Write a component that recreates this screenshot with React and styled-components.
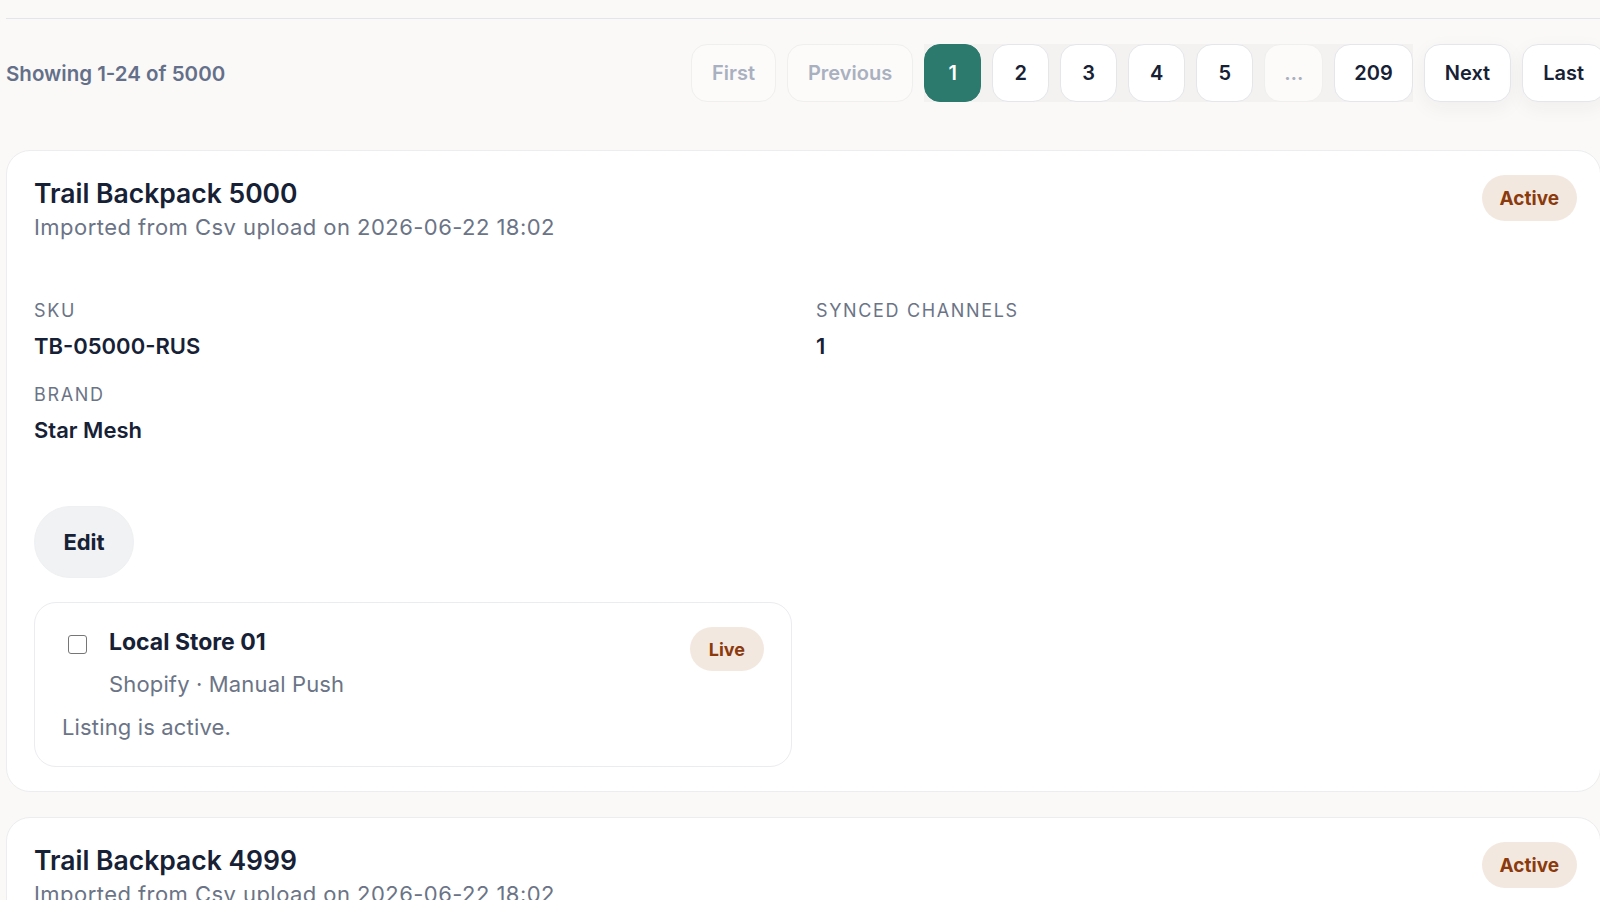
import React from 'react';
import styled, { createGlobalStyle } from 'styled-components';

const GlobalStyle = createGlobalStyle`
    html, body {
        margin: 0;
        padding: 0;
        background: #faf9f7;
        overflow: hidden;
        height: 900px;
    }
    body {
        font-family: Inter, "Noto Sans", Arial, sans-serif;
        color: #172135;
    }
    * {
        box-sizing: border-box;
    }
`;

export const PageWrap = styled.div`
    margin: 18px 0 0 6px;
    width: 1595px;
    border-top: 1px solid #e3e5ea;
`;

export const Toolbar = styled.div`
    display: flex;
    align-items: center;
    justify-content: space-between;
    padding-top: 25px;
    margin-right: -4px;
`;

export const ShowingText = styled.div`
    font-size: 20.5px;
    font-weight: 600;
    color: #64708a;
`;

export const Pagination = styled.nav`
    display: flex;
    align-items: center;
    gap: 11px;
    flex-shrink: 0;
`;

export const PageNumbers = styled.div`
    display: flex;
    gap: 11px;
    background: #f3f2f0;
`;

export const PageButton = styled.button`
    height: 58px;
    min-width: 57px;
    padding: 0 ${p => (p.$number ? '19px' : '20px')};
    border-radius: 16px;
    border: 1px solid ${p => (p.$active ? '#2c7a6d' : p.$disabled ? '#efefee' : '#e4e6ea')};
    background: ${p => (p.$active ? '#2c7a6d' : p.$disabled ? '#fcfbfa' : '#ffffff')};
    color: ${p => (p.$active ? '#ffffff' : p.$disabled ? '#a9b0bf' : '#172135')};
    font-family: inherit;
    font-size: 20px;
    font-weight: 600;
    box-shadow: ${p => (p.$raised ? '0 6px 20px rgba(30, 30, 30, 0.05)' : 'none')};
    cursor: pointer;
`;

export const ProductList = styled.div`
    display: flex;
    flex-direction: column;
    gap: 25px;
    margin-top: 48px;
`;

export const ProductCard = styled.section`
    background: #ffffff;
    border: 1px solid #ecedef;
    border-radius: 24px;
    padding: 24px 23px 24px 27px;
`;

export const CardHeader = styled.div`
    display: flex;
    justify-content: space-between;
    align-items: flex-start;
`;

export const Title = styled.h2`
    margin: 0;
    font-size: 26.5px;
    line-height: 36px;
    font-weight: 600;
    color: #172135;
`;

export const Subtitle = styled.p`
    margin: 0;
    font-size: 22px;
    line-height: 32px;
    letter-spacing: 0.45px;
    color: #6b7486;
`;

export const Badge = styled.span`
    display: inline-flex;
    align-items: center;
    justify-content: center;
    height: ${p => (p.$small ? '44px' : '46px')};
    padding: 0 ${p => (p.$small ? '19px' : '18px')};
    border-radius: 999px;
    background: #f3e8e0;
    color: #8a3a0c;
    font-size: ${p => (p.$small ? '18px' : '19px')};
    font-weight: 700;
    flex-shrink: 0;
`;

export const DetailGrid = styled.div`
    display: grid;
    grid-template-columns: 758px 1fr;
    column-gap: 24px;
    row-gap: 21px;
    margin-top: 55px;
`;

export const DetailLabel = styled.div`
    font-size: 18px;
    line-height: 25px;
    letter-spacing: 1.65px;
    text-transform: uppercase;
    color: #6b7486;
`;

export const DetailValue = styled.div`
    margin-top: 8px;
    font-size: 22px;
    line-height: 30px;
    font-weight: 600;
    color: #172135;
`;

export const EditButton = styled.button`
    margin-top: 61px;
    width: 100px;
    height: 72px;
    border: 1px solid #eef0f1;
    border-radius: 36px;
    background: #f1f2f3;
    color: #172135;
    font-family: inherit;
    font-size: 22px;
    font-weight: 700;
    cursor: pointer;
`;

export const ChannelCard = styled.div`
    margin-top: 24px;
    width: 758px;
    border: 1px solid #ebecef;
    border-radius: 22px;
    padding: 24px 27px 23px;
`;

export const ChannelTop = styled.div`
    display: flex;
    justify-content: space-between;
    align-items: flex-start;
`;

export const ChannelMain = styled.div`
    display: flex;
    align-items: flex-start;
    gap: 22px;
    padding-left: 6px;
`;

export const Checkbox = styled.input.attrs({ type: 'checkbox' })`
    appearance: none;
    margin: 8px 0 0;
    width: 19px;
    height: 19px;
    border: 1.5px solid #767676;
    border-radius: 3px;
    background: #ffffff;
`;

export const ChannelName = styled.div`
    font-size: 23px;
    line-height: 31px;
    font-weight: 700;
    color: #172135;
`;

export const ChannelMeta = styled.div`
    margin-top: 10px;
    font-size: 22px;
    line-height: 32px;
    letter-spacing: 0.15px;
    color: #6b7486;
`;

export const ChannelNote = styled.div`
    margin-top: 11px;
    font-size: 22px;
    line-height: 32px;
    letter-spacing: 0.15px;
    color: #6b7486;
`;

const pages = ['1', '2', '3', '4', '5', '…', '209'];

const products = [
    { id: 5000, sku: 'TB-05000-RUS', brand: 'Star Mesh', channels: 1 },
    { id: 4999, sku: 'TB-04999-RUS', brand: 'Star Mesh', channels: 1 },
];

const ProductItem = ({ product }) => (
    <ProductCard>
        <CardHeader>
            <div>
                <Title>Trail Backpack {product.id}</Title>
                <Subtitle>Imported from Csv upload on 2026-06-22 18:02</Subtitle>
            </div>
            <Badge>Active</Badge>
        </CardHeader>
        <DetailGrid>
            <div>
                <DetailLabel>SKU</DetailLabel>
                <DetailValue>{product.sku}</DetailValue>
            </div>
            <div>
                <DetailLabel>Synced channels</DetailLabel>
                <DetailValue>{product.channels}</DetailValue>
            </div>
            <div>
                <DetailLabel>Brand</DetailLabel>
                <DetailValue>{product.brand}</DetailValue>
            </div>
        </DetailGrid>
        <EditButton>Edit</EditButton>
        <ChannelCard>
            <ChannelTop>
                <ChannelMain>
                    <Checkbox />
                    <div>
                        <ChannelName>Local Store 01</ChannelName>
                        <ChannelMeta>Shopify · Manual Push</ChannelMeta>
                    </div>
                </ChannelMain>
                <Badge $small>Live</Badge>
            </ChannelTop>
            <ChannelNote>Listing is active.</ChannelNote>
        </ChannelCard>
    </ProductCard>
);

export default function App() {
    return (
        <>
            <GlobalStyle />
            <PageWrap>
                <Toolbar>
                    <ShowingText>Showing 1-24 of 5000</ShowingText>
                    <Pagination>
                        <PageButton $disabled>First</PageButton>
                        <PageButton $disabled>Previous</PageButton>
                        <PageNumbers>
                            {pages.map(p => (
                                <PageButton key={p} $number $active={p === '1'} $disabled={p === '…'}>
                                    {p}
                                </PageButton>
                            ))}
                        </PageNumbers>
                        <PageButton $raised>Next</PageButton>
                        <PageButton $raised>Last</PageButton>
                    </Pagination>
                </Toolbar>
                <ProductList>
                    {products.map(p => (
                        <ProductItem key={p.id} product={p} />
                    ))}
                </ProductList>
            </PageWrap>
        </>
    );
}
